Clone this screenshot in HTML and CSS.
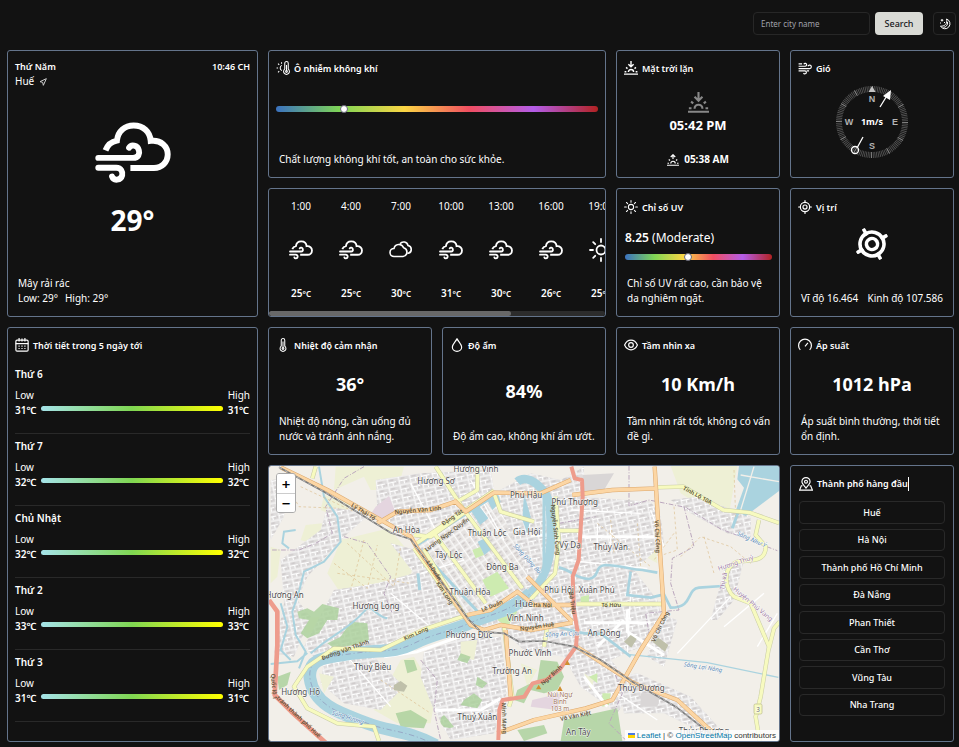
FILE: index.html
```html
<!DOCTYPE html>
<html lang="vi">
<head>
<meta charset="utf-8">
<meta name="viewport" content="width=device-width, initial-scale=1">
<title>Thời tiết</title>
<link rel="stylesheet" href="styles.css">
</head>
<body>
<svg class="defs" aria-hidden="true">
  <symbol id="cloud-wind" viewBox="280 226 232 232">
    <g fill="none" stroke="currentColor" stroke-width="18">
      <path d="M312 334C318 318 330 307 347 304C350 275 371 258 398 258C427 258 448 277 450 305C482 301 502 322 502 346C502 370 484 388 460 388H388"/>
      <path stroke-linecap="round" d="M290 357H396C413 357 417 344 414 334C410 317 390 315 384 326M290 387H345C360 387 365 400 363 410C359 426 337 428 332 414"/>
    </g>
  </symbol>
  <symbol id="clouds" viewBox="0 0 24 24">
    <g fill="none" stroke="currentColor" stroke-width="1.6" stroke-linejoin="round">
      <path d="M5 18.500a4 4 0 0 1 0-8 5 5 0 0 1 9.600-.8A4.500 4.500 0 0 1 14 18.500Z"/>
      <path d="M11 5.800A4.500 4.500 0 0 1 19 7.500a4 4 0 0 1 .3 7.800h-1"/>
    </g>
  </symbol>
  <symbol id="sun" viewBox="0 0 24 24">
    <g fill="none" stroke="currentColor" stroke-width="1.800" stroke-linecap="round">
      <circle cx="12" cy="12" r="4.500"/>
      <path d="M12 1v3M12 20v3M1 12h3M20 12h3M4.200 4.200l2 2M17.800 17.800l2 2M4.200 19.800l2-2M17.800 6.200l2-2"/>
    </g>
  </symbol>
  <symbol id="sunset" viewBox="0 0 24 24">
    <g fill="none" stroke="currentColor" stroke-width="2.400">
      <path d="M12 0v9M7.500 5.500 12 10l4.500-4.500M0 22.500h24M1 18.500h3M20 18.500h3M7.500 19a4.500 4.500 0 0 1 9 0M3.500 11l2.500 2M20.500 11 18 13"/>
    </g>
  </symbol>
  <symbol id="sunrise" viewBox="0 0 24 24">
    <g fill="none" stroke="currentColor" stroke-width="2.400">
      <path d="M12 10V2M7.500 6 12 1.500 16.500 6M0 22.500h24M1 18.500h3M20 18.500h3M7.500 19a4.500 4.500 0 0 1 9 0M3.500 11l2.500 2M20.500 11 18 13"/>
    </g>
  </symbol>
  <symbol id="target" viewBox="0 0 24 24">
    <g fill="none" stroke="currentColor" stroke-width="2">
      <circle cx="12" cy="12" r="8"/><circle cx="12" cy="12" r="3.500"/>
      <path stroke-linecap="round" d="M12 1v3M12 20v3M1 12h3M20 12h3"/>
    </g>
  </symbol>
  <symbol id="target-bold" viewBox="0 0 24 24">
    <g fill="none" stroke="currentColor" stroke-width="2.400">
      <circle cx="12" cy="12" r="8"/><circle cx="12" cy="12" r="3.700"/>
      <path stroke-linecap="round" d="M12 1.200v3M12 19.800v3M1.200 12h3M19.800 12h3"/>
    </g>
  </symbol>
</svg>

<header class="topbar">
  <form class="search">
    <input class="search-input" type="text" placeholder="Enter city name" aria-label="Enter city name">
    <button class="search-button" type="button">Search</button>
  </form>
  <button class="theme-button" type="button" aria-label="Theme">
    <svg class="icon-s" viewBox="0 0 24 24" fill="none" stroke="currentColor" stroke-width="2"><path d="M15 2a10 10 0 1 1-12 14c7 2 15-5 12-14Z"/><path d="M17 8c1 6-3 10-8 11M6 2v5M3.500 4.500h5M2 10h2M10 9h2"/></svg>
  </button>
</header>

<main class="dashboard">
  <section class="card now">
    <div class="now-head">
      <div class="row"><strong>Thứ Năm</strong><strong>10:46 CH</strong></div>
      <div class="city">Huế <svg class="icon-xs" viewBox="0 0 24 24" fill="none" stroke="currentColor" stroke-width="3"><path d="M3 11 22 2l-9 20-2-9Z"/></svg></div>
    </div>
    <div class="now-body">
      <svg class="now-icon"><use href="#cloud-wind"/></svg>
      <div class="now-temp">29°</div>
    </div>
    <div class="desc"><div>Mây rải rác</div><div class="range"><span>Low: 29°</span><span>High: 29°</span></div></div>
  </section>

  <section class="card air">
    <h2><svg class="icon" viewBox="0 0 24 24" fill="none" stroke="currentColor" stroke-width="1.800"><path d="M15 14V4a3 3 0 0 1 6 0v10a5 5 0 1 1-6 0M18 7v10M10 7.500a5 5 0 0 0 0 9M1 12h2.500M3.500 4.500l2 2M3.500 19.500l2-2M9.500 2v2.500"/><circle cx="18" cy="18" r="1.500"/></svg>Ô nhiễm không khí</h2>
    <div class="meter"><span class="knob knob-air"></span></div>
    <p class="desc">Chất lượng không khí tốt, an toàn cho sức khỏe.</p>
  </section>

  <section class="card sun">
    <h2><svg class="icon"><use href="#sunset"/></svg>Mặt trời lặn</h2>
    <div class="sun-body"><svg class="sun-icon"><use href="#sunset"/></svg><div class="sun-time">05:42 PM</div></div>
    <div class="sun-foot"><svg class="icon-s"><use href="#sunrise"/></svg><strong>05:38 AM</strong></div>
  </section>

  <section class="card wind">
    <h2><svg class="icon" viewBox="0 0 24 24" fill="none" stroke="currentColor" stroke-width="2"><path d="M1 9h11.500a2.500 2.500 0 1 0-2.500-3.500M1 13h19a3 3 0 1 0-3-4M1 17h11a2.500 2.500 0 1 1-2.500 3.500M1 5h6M15 17h4"/></svg>Gió</h2>
    <svg class="compass" viewBox="0 0 76 76">
      <circle cx="38" cy="38" r="33" fill="none" stroke="#565656" stroke-width="6" pathLength="360" stroke-dasharray="1.500 1.500"/>
      <circle cx="38" cy="38" r="33" fill="none" stroke="#858585" stroke-width="6" pathLength="360" stroke-dasharray="1.500 28.500"/>
      <path d="m38 2 3.500 6h-7Z" fill="#c4c4c4"/>
      <g class="points"><text x="38" y="18">N</text><text x="61" y="41">E</text><text x="38" y="65">S</text><text x="15" y="41">W</text></g>
      <text class="speed" x="38" y="41">1m/s</text>
      <g stroke="#fff" stroke-width="1.300" fill="none"><path d="m46 23 8-13M29 53l-6 11"/><circle cx="21" cy="66" r="3.500"/></g>
      <path d="m57 6-1 10-7-4Z" fill="#fff"/>
    </svg>
  </section>

  <section class="card hourly">
    <ul class="hours">
      <li><span>1:00</span><svg class="hour-icon"><use href="#cloud-wind"/></svg><strong>25<small>°C</small></strong></li>
      <li><span>4:00</span><svg class="hour-icon"><use href="#cloud-wind"/></svg><strong>25<small>°C</small></strong></li>
      <li><span>7:00</span><svg class="hour-icon"><use href="#clouds"/></svg><strong>30<small>°C</small></strong></li>
      <li><span>10:00</span><svg class="hour-icon"><use href="#cloud-wind"/></svg><strong>31<small>°C</small></strong></li>
      <li><span>13:00</span><svg class="hour-icon"><use href="#cloud-wind"/></svg><strong>30<small>°C</small></strong></li>
      <li><span>16:00</span><svg class="hour-icon"><use href="#cloud-wind"/></svg><strong>26<small>°C</small></strong></li>
      <li><span>19:00</span><svg class="hour-icon"><use href="#sun"/></svg><strong>25<small>°C</small></strong></li>
    </ul>
    <div class="track"><div class="thumb"></div></div>
  </section>

  <section class="card uv">
    <h2><svg class="icon"><use href="#sun"/></svg>Chỉ số UV</h2>
    <div class="uv-body"><div class="uv-value"><strong>8.25</strong> (Moderate)</div><div class="meter"><span class="knob knob-uv"></span></div></div>
    <p class="desc">Chỉ số UV rất cao, cần bảo vệ da nghiêm ngặt.</p>
  </section>

  <section class="card place">
    <h2><svg class="icon"><use href="#target"/></svg>Vị trí</h2>
    <svg class="place-icon"><use href="#target-bold"/></svg>
    <div class="coords"><span>Vĩ độ 16.464</span><span>Kinh độ 107.586</span></div>
  </section>

  <section class="card forecast">
    <h2><svg class="icon" viewBox="0 0 24 24" fill="none" stroke="currentColor" stroke-width="2"><rect x="1.500" y="3.500" width="21" height="19" rx="2"/><path d="M1 9.500h22M7 0v6M17 0v6M12 1v5M6 14h2M11 14h2M16 14h2M6 18h2M11 18h2M16 18h2"/></svg>Thời tiết trong 5 ngày tới</h2>
    <ul class="days">
      <li><strong>Thứ 6</strong><div class="day"><div>Low<b>31℃</b></div><i></i><div>High<b>31℃</b></div></div></li>
      <li><strong>Thứ 7</strong><div class="day"><div>Low<b>32℃</b></div><i></i><div>High<b>32℃</b></div></div></li>
      <li><strong>Chủ Nhật</strong><div class="day"><div>Low<b>32℃</b></div><i></i><div>High<b>32℃</b></div></div></li>
      <li><strong>Thứ 2</strong><div class="day"><div>Low<b>33℃</b></div><i></i><div>High<b>33℃</b></div></div></li>
      <li><strong>Thứ 3</strong><div class="day"><div>Low<b>31℃</b></div><i></i><div>High<b>31℃</b></div></div></li>
    </ul>
  </section>

  <section class="card">
    <h2><svg class="icon" viewBox="0 0 24 24" fill="none" stroke="currentColor" stroke-width="1.800"><path d="M9 14V4a3 3 0 0 1 6 0v10a5 5 0 1 1-6 0M12 6v10"/><circle cx="12" cy="18" r="1.500"/></svg>Nhiệt độ cảm nhận</h2>
    <div class="value">36°</div>
    <p class="desc">Nhiệt độ nóng, cần uống đủ nước và tránh ánh nắng.</p>
  </section>
  <section class="card">
    <h2><svg class="icon" viewBox="0 0 24 24" fill="none" stroke="currentColor" stroke-width="2"><path d="M12 1.500C9 7 4 11 4 15.500a8 7.500 0 0 0 16 0C20 11 15 7 12 1.500Z"/></svg>Độ ẩm</h2>
    <div class="value">84%</div>
    <p class="desc">Độ ẩm cao, không khí ẩm ướt.</p>
  </section>
  <section class="card">
    <h2><svg class="icon" viewBox="0 0 24 24" fill="none" stroke="currentColor" stroke-width="2"><path d="M1 12c5-11 17-11 22 0-5 11-17 11-22 0Z"/><circle cx="12" cy="12" r="4"/></svg>Tầm nhìn xa</h2>
    <div class="value">10 Km/h</div>
    <p class="desc">Tầm nhìn rất tốt, không có vấn đề gì.</p>
  </section>
  <section class="card">
    <h2><svg class="icon" viewBox="0 0 24 24" fill="none" stroke="currentColor" stroke-width="2"><path d="M4 20.500A11 11 0 1 1 20 20.500M12 14.500l5-6"/></svg>Áp suất</h2>
    <div class="value">1012 hPa</div>
    <p class="desc">Áp suất bình thường, thời tiết ổn định.</p>
  </section>

  <section class="card map">
    <svg class="map-canvas" viewBox="15 18 1530 825" preserveAspectRatio="xMidYMid slice">
      <defs>
        <pattern id="streets" width="34" height="26" patternUnits="userSpaceOnUse" patternTransform="rotate(-12)"><path d="M0 3h34M9 3v23M9 16h25M24 16v10" stroke="#fff" stroke-width="3" fill="none"/><path d="M15 9h12M2 20h4M29 21h4" stroke="#cac5c6" stroke-width="4"/></pattern>
        <pattern id="blocks" width="38" height="28" patternUnits="userSpaceOnUse" patternTransform="rotate(-34)"><path d="M0 3h38M4 0v28M24 3v25" stroke="#fff" stroke-width="3" fill="none"/><path d="M9 10h10M28 18h6M9 21h8" stroke="#cbc6c6" stroke-width="4"/></pattern>
        <g id="town"><path d="M335 60 470 40 680 30 690 90 455 230 380 200 340 150ZM380 250 455 270 600 465 440 510 370 555 150 590 120 560 210 390 340 370 450 340ZM20 60 80 55 60 170 20 240ZM190 140 320 160 240 230 130 350 100 420 140 470 90 590 30 580 60 430 50 300 170 210ZM690 100 800 40 890 60 960 20 960 110 1160 125 1190 170 1200 250 1110 330 1180 420 1200 500 1130 560 1040 600 1110 680 1060 760 950 680 900 590 780 570 700 500 640 500 620 470 790 370ZM480 575 600 530 710 530 730 690 690 820 560 840 510 750 470 650ZM180 600 330 590 420 680 350 750 240 730 170 670ZM1060 650 1120 640 1280 710 1390 830 1350 835 1200 760 1080 760ZM1220 120 1300 110 1460 170 1460 230 1390 220 1280 160ZM1380 330 1440 300 1410 420 1360 480 1340 480ZM1180 460 1240 480 1200 620 1150 590Z"/></g>
        <path id="river" d="M515 856C430 810 380 817 310 790S150 740 138 655C130 590 190 592 270 580S390 580 450 550 560 515 620 488 730 460 800 400"/>
        <path id="river-north" d="M800 400C860 340 866 270 858 140 850 85 790 38 760 65 697 82 678 28"/>
        <path id="rail" d="M45 22 180 95 380 218 440 238 615 480 650 515 720 520 765 545 840 543 930 560 1010 600 1100 662 1235 740 1350 830"/>
      </defs>
      <rect x="15" y="18" width="1530" height="825" fill="#f2efe9"/>
      <g fill="#eef0d5">
        <path d="M215 20H420L400 90 320 90 300 50 210 90ZM180 105 265 130 230 175 170 150ZM230 240 375 205 455 300 430 370 330 380 230 400 190 340ZM125 195 175 190 170 260 110 240ZM410 600 450 590 480 640 510 730 500 790 400 790 330 750ZM1220 18H1420L1390 190 1250 100ZM1000 200 1170 190 1180 310 1070 250ZM95 475 180 470 190 510 110 520ZM20 260 50 270 40 350 20 370Z"/>
      </g>
      <use href="#town" fill="#dfdddd"/><use href="#town" fill="url(#streets)"/>
      <path d="M455 265 690 98 800 370 610 465Z" fill="#e5e2e0"/><path d="M455 265 690 98 800 370 610 465Z" fill="url(#blocks)"/>
      <path d="M590 545 640 540 630 600 590 590ZM165 640 210 650 180 700ZM770 610 820 630 790 680ZM960 640 990 660 980 690Z" fill="#eef0d5"/>
      <path d="M335 140 375 108 392 150 350 187 315 170ZM805 720 890 700 880 750 800 740Z" fill="#e4d5df"/>
      <path d="M955 45 1050 40 1020 90 955 100ZM1130 700 1190 700 1180 740 1130 740Z" fill="#d9d6d6"/>
      <g fill="#add19e">
        <path d="M100 455 130 445 150 455 175 432 225 445 220 480 190 480 165 520 130 535 110 520 135 480 105 475ZM190 550 230 530 260 485 310 490 315 540 270 555 210 565ZM395 760 440 750 490 780 480 805 410 800ZM600 720 630 700 655 720 640 745 590 735ZM640 650 670 670 655 685 635 675ZM40 650 80 635 70 675 45 690ZM830 600 880 605 900 650 880 690 840 700 800 690 780 730 750 720 760 690 820 660ZM900 780 1060 745 1075 843H890ZM760 810 840 795 850 820 780 843ZM540 765a22 18 0 1 0 30 35ZM590 580 620 590 610 610 580 600ZM420 600 450 600 460 630 430 640Z" opacity=".85"/>
        <path fill="#cdebb0" d="M655 360 700 335 735 385 680 410ZM950 410 975 405 975 428 950 428ZM625 270 650 260 660 285 635 295ZM700 480 740 440 760 455 730 500ZM1015 700 1040 700 1035 735 1015 740ZM975 650 1000 640 1000 670Z"/>
      </g>
      <g fill="none" stroke="#fff" stroke-linejoin="round"><g stroke-width="9"><path d="M950 230h220M800 226h85M960 488h200M1090 450v65l110 70M1000 560l80-80M360 590l100-15 140-50M485 520l20 25M960 650l70 90M510 750h140l60-35"/></g><g stroke-width="4"><path d="M440 70 520 220M620 60 720 240M1160 150l40 110M1100 400l-10 180M250 590l130 150M380 400l130 110M470 340 600 300M1380 500l120-100M1240 580l160-170M1060 700l120 80M1480 560l60-100M920 150l210 10M900 300l250 25M1000 190v60M1040 200v70"/></g></g>
      <g fill="#aad3df">
        <path d="M1425 18h120v75l-100 75-30-15 25-70-20-25Z"/><path d="m670 120 30-25 10 30-25 25ZM623 155l20-20 30 40-25 20ZM641 245l30-15 15 35-25 20ZM780 100l20 70-10 50-15-40Z"/>
        <path fill="none" stroke="#aad3df" stroke-width="9" d="m460 255 235-150M470 270l180 195M462 340l5 50M840 95v230M1425 150l-20 55"/>
      </g>
      <path d="M1430 45l115 20M1470 20l-40 130" stroke="#f2efe9" stroke-width="4"/>
      <g fill="none" stroke="#aad3df">
        <use href="#river" stroke-width="38" stroke-linejoin="round"/>
        <use href="#river-north" stroke-width="26" stroke-linejoin="round"/>
        <path d="M95 210 60 215 55 250 75 265M165 20l15 90 40 60 10 75-50 60-60 30-15 60-20 60 10 70 30 50-20 50M20 612l80-8 30-25M50 430l20 70-20 70 30 30M140 580c80-70 100-60 160-125 20-30 35 15 70 20" stroke-width="6"/>
        <path d="M885 322c40 10 50 35 90 35 35-8 15-40 50-42 40 0 80 15 110 15l45 8M1100 335l-10 70 70 8 40-10 20 40c70 0 45-55 85-60l70-5M840 500c50-10 100 30 170 20l90 70" stroke-width="8"/>
        <path d="M1090 583l240 25 213 44" stroke-width="4"/>
      </g>
      <use href="#river" fill="none" stroke="#8d93b8" stroke-width="2" stroke-dasharray="16 8 3 8"/>
      <g fill="none" stroke="#bba7bd" stroke-width="3" stroke-dasharray="14 5 3 5"><path d="M300 20 240 55l-55 85 20 80-50 30-50 20H20M240 230l70 20 70 100-20 50 25 60M1095 18v120l60-18 110 22 105 65 170 65M1260 140l30 120-65 35-5 75 25 80-100 10 10 60M1045 620l30 80-40 90 50 50M470 600l50 60-10 90 20 90M885 190l110-20"/></g>
      <g fill="none" stroke="#ddbf91" stroke-width="2" stroke-dasharray="8 7"><path d="M60 60l45 80 120 5M110 80l160 75M210 310l100 75 30-130M250 250l140 130 20-120M220 340l220 30M300 240l-40 150M1250 290l60-60 90 30 60 50M1320 230l30 110M1040 180l10 100M1000 190l160 130M1230 140l10 130-60 20M1410 30l5 140M1120 190l10 130M350 660l150 100M1230 220l-60 80"/></g>
      <g fill="none" stroke-linejoin="round">
        <g stroke="#c8cba5" stroke-width="13"><path d="M515 20 600 150 775 385M480 268 600 465M510 220 665 430M450 265 540 390 610 480M690 92 450 255M450 225 500 230 690 95M155 20l-10 35M640 20v70l-60 35M690 100l20 55 100 30M875 110l10 140-12 90-75 80M1178 82l80-2 120 70 80 8 87 31M1485 180l-10 45 30 35c0 50-50 38-85 45-50 20-35 85-10 105l50 20 55 130-25 150-15 60 12 73M1515 565l15-60 17-20M938 432h260M885 212h60M850 500l-10 60M610 465 480 508 350 570 210 565 130 620 90 680 130 745 220 790 330 800 345 843M720 500l25 210-10 30"/></g>
        <g stroke="#f7fabf" stroke-width="10"><path d="M515 20 600 150 775 385M480 268 600 465M510 220 665 430M450 265 540 390 610 480M690 92 450 255M450 225 500 230 690 95M155 20l-10 35M640 20v70l-60 35M690 100l20 55 100 30M875 110l10 140-12 90-75 80M1178 82l80-2 120 70 80 8 87 31M1485 180l-10 45 30 35c0 50-50 38-85 45-50 20-35 85-10 105l50 20 55 130-25 150-15 60 12 73M1515 565l15-60 17-20M938 432h260M885 212h60M850 500l-10 60M610 465 480 508 350 570 210 565 130 620 90 680 130 745 220 790 330 800 345 843M720 500l25 210-10 30"/></g>
        <g stroke="#dca76c" stroke-width="13"><path d="M50 22 190 90 440 230 460 265 620 495 660 510 710 495 800 510 925 488M340 190 400 155 500 150 575 125 605 155 690 98 830 100 920 60M605 155 570 120M610 465 680 450 760 395 810 435 925 435M925 485 790 350M925 105l120-15 135-5M1172 20l15 240 13 200-70 110-85 150-80 25-155 35-110 40M930 555l180 115 130 50 120 110M725 510l15 200"/></g>
        <g stroke="#fcd6a4" stroke-width="10"><path d="M50 22 190 90 440 230 460 265 620 495 660 510 710 495 800 510 925 488M340 190 400 155 500 150 575 125 605 155 690 98 830 100 920 60M605 155 570 120M610 465 680 450 760 395 810 435 925 435M925 485 790 350M925 105l120-15 135-5M1172 20l15 240 13 200-70 110-85 150-80 25-155 35-110 40M930 555l180 115 130 50 120 110M725 510l15 200"/></g>
        <path d="M922 20l10 35 22 5 2 50-12 190-18 50 4 100 10 60-4 50-50 70-40 30-40 10-25 40-65 10-10 30-3 90" stroke="#ee9c8c" stroke-width="12"/>
        <path d="M15 420l25 35v100l-8 150 50 50 105 95" stroke="#ee9c8c" stroke-width="14"/>
        <use href="#rail" stroke="#7c7c7c" stroke-width="5"/><use href="#rail" stroke="#ddd" stroke-width="2" stroke-dasharray="10 10"/>
      </g>
      <path d="m1080 545 20-20 18 12-16 26ZM1165 545l18-12 30 22-10 20ZM390 675l20-12 20 14-10 18-30-4Z" fill="#bfc0aa"/>
      <path d="m910 600 8 15h-16ZM888 678l8 15h-16ZM824 674l8 14h-16Z" fill="#d08f30"/>
      <g class="places">
        <text x="636" y="36">Hương Vinh</text><text x="516" y="71">Hương Sơ</text><text x="427" y="220">An Hòa</text><text x="669" y="228">Thuận Lộc</text><text x="554" y="293">Tây Lộc</text><text x="715" y="329">Đông Ba</text><text x="618" y="405">Thuận Hòa</text><text x="62" y="413">Hương An</text><text x="336" y="446">Hương Long</text><text x="615" y="533">Phường Đúc</text><text x="326" y="629">Thuỷ Biều</text><text x="110" y="704">Hương Hồ</text><text x="640" y="779">Thuỷ Xuân</text><text x="786" y="113">Phú Hậu</text><text x="788" y="226">Gia Hội</text><text x="932" y="136">Phú Thượng</text><text x="918" y="263">Vỹ Dạ</text><text x="1040" y="269">Thủy Vân</text><text x="885" y="398">Phú Hội</text><text x="998" y="399">Xuân Phú</text><text class="main-place" x="780" y="442">Huế</text><text x="784" y="482">Vĩnh Ninh</text><text x="1020" y="528">An Đông</text><text x="798" y="589">Phước Vĩnh</text><text x="744" y="643">Trường An</text><text x="1132" y="692">Thủy Dương</text><text x="943" y="824">An Tây</text><text x="1320" y="822">Thủy Phương</text>
      </g>
      <g class="roads">
        <text transform="translate(295 160) rotate(32)">Lý Thái Tổ</text><text transform="translate(462 156) rotate(-5)">Nguyễn Văn Linh</text><text transform="translate(568 177) rotate(-34)">Đặng Tất</text><text transform="translate(552 228) rotate(-36)">Lương Ngọc Quyến</text><text transform="translate(505 335) rotate(57)">Lê Duẩn</text><text transform="translate(537 402) rotate(57)">Kim Long</text><text transform="translate(686 443) rotate(-22)">Lê Duẩn</text><text transform="translate(458 526) rotate(-24)">Kim Long</text><text transform="translate(246 575) rotate(-20)">Đường Văn Thánh</text><text transform="translate(24 680) rotate(85)">Quốc lộ 1</text><text transform="translate(100 775) rotate(43)">tránh thành phố Huế</text><text transform="translate(869 210) rotate(84)">Nguyễn Sinh Cung</text><text transform="translate(920 430) rotate(82)">Bà Triệu</text><text transform="translate(1174 230) rotate(87)">Võ Chí Công</text><text transform="translate(1194 502) rotate(-64)">Võ Chí Công</text><text transform="translate(1298 111) rotate(28)">Tỉnh Lộ 10A</text><text x="1042" y="440">Tố Hữu</text><text x="836" y="441">Hà Nội</text><text transform="translate(820 505) rotate(-8)">Nguyễn Huệ</text><text transform="translate(866 650) rotate(-42)">Ngự Bình</text><text transform="translate(936 773) rotate(-12)">Võ Văn Kiệt</text><text transform="translate(715 775) rotate(88)">Minh Mạng</text>
      </g>
      <g class="water"><text transform="translate(250 778) rotate(17)">Sông Hương</text><text transform="translate(785 300) rotate(48)">Sông Đông Ba</text><text transform="translate(895 528) rotate(-3)">Sông An Cựu</text><text transform="translate(1316 628) rotate(9)">Sông Lợi Nông</text><text transform="translate(1460 244) rotate(25)">Sông Như Ý</text></g>
      <g class="district"><text transform="translate(1385 365) rotate(-80)">Thị xã</text><text transform="translate(1417 315) rotate(-18)">Hương Thuỷ</text><text transform="translate(1463 437) rotate(40)">Huyện Phú Vang</text></g>
      <g class="hill"><text x="888" y="710">Núi Ngự</text><text x="888" y="732">Bình</text><text x="888" y="754">103 m</text></g>
      <rect x="1470" y="732" width="24" height="30" rx="4" fill="#f7fabf" stroke="#b9ba89" stroke-width="2"/><text class="shield" x="1482" y="755">3</text>
    </svg>
    <div class="zoom"><button type="button" aria-label="Zoom in">+</button><button type="button" aria-label="Zoom out">−</button></div>
    <div class="credit"><span class="flag"></span><a href="#">Leaflet</a> | © <a href="#">OpenStreetMap</a> contributors</div>
  </section>

  <section class="card cities">
    <h2><svg class="icon" viewBox="0 0 24 24" fill="none" stroke="currentColor" stroke-width="2"><path d="M12 19C8 14 5 11 5 8a7 7 0 0 1 14 0c0 3-3 6-7 11ZM6 15H4l-3 7.500h22L20 15h-2"/><circle cx="12" cy="8" r="2.500"/></svg><span class="caret">Thành phố hàng đầu</span></h2>
    <div class="city-list">
      <button type="button">Huế</button><button type="button">Hà Nội</button><button type="button">Thành phố Hồ Chí Minh</button><button type="button">Đà Nẵng</button><button type="button">Phan Thiết</button><button type="button">Cần Thơ</button><button type="button">Vũng Tàu</button><button type="button">Nha Trang</button>
    </div>
  </section>
</main>
</body>
</html>
```
FILE: styles.css
```css
* { box-sizing: border-box; }
body {
  margin: 0;
  min-height: 100vh;
  display: flex;
  flex-direction: column;
  background: #121212;
  color: #fff;
  font: 10px/15px "Noto Sans", "Open Sans", sans-serif;
}
h2, p, ul { margin: 0; padding: 0; }
ul { list-style: none; }
button, input { font: inherit; color: inherit; }
svg { display: block; flex: none; }
strong, b { font-weight: 600; }
.defs { position: absolute; width: 0; height: 0; }
.icon { width: 14px; height: 14px; }
.icon-s { width: 12px; height: 12px; }
.icon-xs { width: 8px; height: 8px; color: #ccc; }

.topbar { display: flex; justify-content: flex-end; gap: 10px; padding: 12px 3px 15px; }
.search { display: flex; gap: 5px; }
.search-input, .search-button, .theme-button { height: 23px; border-radius: 4px; }
.search-input { width: 117px; padding: 0 7px; background: transparent; border: 1px solid #272727; font-size: 8px; }
.search-input::placeholder { color: #a1a1aa; opacity: 1; }
.search-button { width: 48px; padding: 0; border: 0; background: #d9dad5; color: #18181b; font-size: 9px; font-weight: 500; }
.theme-button { width: 23px; padding: 0; display: grid; place-items: center; background: transparent; border: 1px solid #272727; }

.dashboard {
  flex: 1;
  display: grid;
  grid-template-columns: 251fr repeat(4, minmax(0, 164fr));
  grid-template-rows: 128fr 129fr 128fr 277fr;
  gap: 10px;
  padding: 0 5px 5px 7px;
}
.card {
  min-width: 0;
  display: flex;
  flex-direction: column;
  justify-content: space-between;
  padding: 9px 7px 10px;
  border: 1px solid #64748b;
  border-radius: 3px;
}
.now, .forecast { grid-row: span 2; }
.air, .hourly { grid-column: span 2; }
.map { grid-column: span 3; }
h2 { display: flex; align-items: center; gap: 4px; height: 16px; font-size: 9px; font-weight: 600; }
.desc { padding: 0 0 0 3px; }
.value { text-align: center; font-size: 18px; line-height: 24px; font-weight: 700; }

.now { padding-top: 8px; }
.row, .coords { display: flex; justify-content: space-between; }
.row { font-size: 9px; }
.city { display: flex; align-items: center; gap: 5px; }
.now-body { display: flex; flex-direction: column; align-items: center; margin-bottom: 10px; }
.now-icon { width: 76px; height: 76px; }
.now-temp { margin-top: 9px; font-size: 28px; line-height: 40px; font-weight: 700; }
.range { display: flex; gap: 7px; }

.meter { position: relative; height: 6px; border-radius: 3px; background: linear-gradient(90deg, #3b72c0, #80d655 20%, #fbd544 40%, #f04e61 60%, #b35de8 80%, #b22222); }
.air .meter { margin-bottom: 10px; }
.knob { position: absolute; top: -1px; width: 8px; height: 8px; margin-left: -4px; border-radius: 50%; background: #fff; border: 1px solid #667; }
.knob-air { left: 21%; }
.knob-uv { left: 43%; }

.sun-body { display: flex; flex-direction: column; align-items: center; }
.sun-icon { width: 21px; height: 21px; color: #888; }
.sun-time { font-size: 13px; line-height: 24px; font-weight: 700; }
.sun-foot { display: flex; justify-content: center; align-items: center; gap: 5px; }
.sun-foot strong { font-weight: 700; }

.wind { justify-content: flex-start; }
.compass { width: 76px; height: 76px; margin: 8px auto 0; }
.points { fill: #b4b4b4; font: 700 9px "Liberation Sans", sans-serif; text-anchor: middle; }
.speed { fill: #fff; font-size: 9px; font-weight: 700; text-anchor: middle; }

.hourly { padding: 10px 0 0; overflow: hidden; }
.hours { display: flex; padding: 0 7px; flex: 1; overflow: hidden; }
.hours li { flex: 0 0 50px; display: flex; flex-direction: column; align-items: center; justify-content: space-between; padding-bottom: 10px; }
.hour-icon { width: 24px; height: 24px; }
.hours small { font-size: 8px; }
.track { height: 5px; border-radius: 3px; background: #2c2c2c; }
.thumb { width: 72%; height: 5px; border-radius: 3px; background: #686868; }

.uv, .place { padding-top: 10px; }
.uv-body { display: flex; flex-direction: column; gap: 7px; padding: 0 0 2px 1px; }
.uv-value { font-size: 12px; line-height: 18px; }
.place-icon { width: 36px; height: 36px; margin: 0 auto 18px; transform: rotate(-30deg); }
.coords { padding: 0 3px; }

.forecast { justify-content: flex-start; gap: 9px; }
.days li { height: 72px; padding-top: 5px; border-bottom: 1px solid #292929; }
.day { display: flex; gap: 5px; margin-top: 6px; }
.day b { display: block; }
.day i { flex: 1; align-self: flex-end; height: 5px; margin-bottom: 7px; border-radius: 3px; background: linear-gradient(90deg, #a5e3e9, #7fd652 50%, #ff0); }

.map { position: relative; padding: 0; overflow: hidden; min-height: 0; }
.map-canvas { width: 100%; height: 0; flex: 1 1 0; min-height: 100%; }
.map text { text-anchor: middle; paint-order: stroke; stroke: #fffc; stroke-width: 3px; stroke-linejoin: round; }
.places { font-size: 24px; fill: #4c4c4c; }
.map .main-place { font-size: 28px; }
.roads { font-size: 17px; font-weight: 600; fill: #5d5238; }
.map .roads text { stroke: none; }
.water { font-size: 18px; font-style: italic; fill: #5586b3; }
.district { font-size: 19px; fill: #9c7ba4; }
.hill { font-size: 19px; fill: #a07458; }
.shield { font-size: 19px; fill: #666; }
.zoom { position: absolute; left: 7px; top: 7px; width: 20px; border: 1px solid #aaa; border-radius: 3px; overflow: hidden; }
.zoom button { display: block; width: 100%; height: 19px; padding: 0; border: 0; background: #fff; color: #000; font-size: 15px; line-height: 18px; font-weight: 600; }
.zoom button + button { border-top: 1px solid #ccc; }
.credit { position: absolute; right: 0; bottom: 0; padding: 0 3px; background: #fffc; color: #333; font: 8px/11px "Liberation Sans", sans-serif; }
.credit a { color: #0078a8; text-decoration: none; }
.flag { display: inline-block; width: 7px; height: 5px; margin-right: 2px; background: linear-gradient(#4c7be1 50%, #ffd500 50%); }

.cities { justify-content: flex-start; gap: 9px; padding: 10px 8px 25px; }
.caret { border-right: 1px solid #fff; line-height: 14px; white-space: nowrap; }
.city-list { flex: 1; display: grid; grid-auto-rows: 1fr; gap: 5px; }
.city-list button { min-height: 0; padding: 0; background: transparent; border: 1px solid #292929; border-radius: 4px; font-size: 9px; line-height: 15px; font-weight: 500; }
```
